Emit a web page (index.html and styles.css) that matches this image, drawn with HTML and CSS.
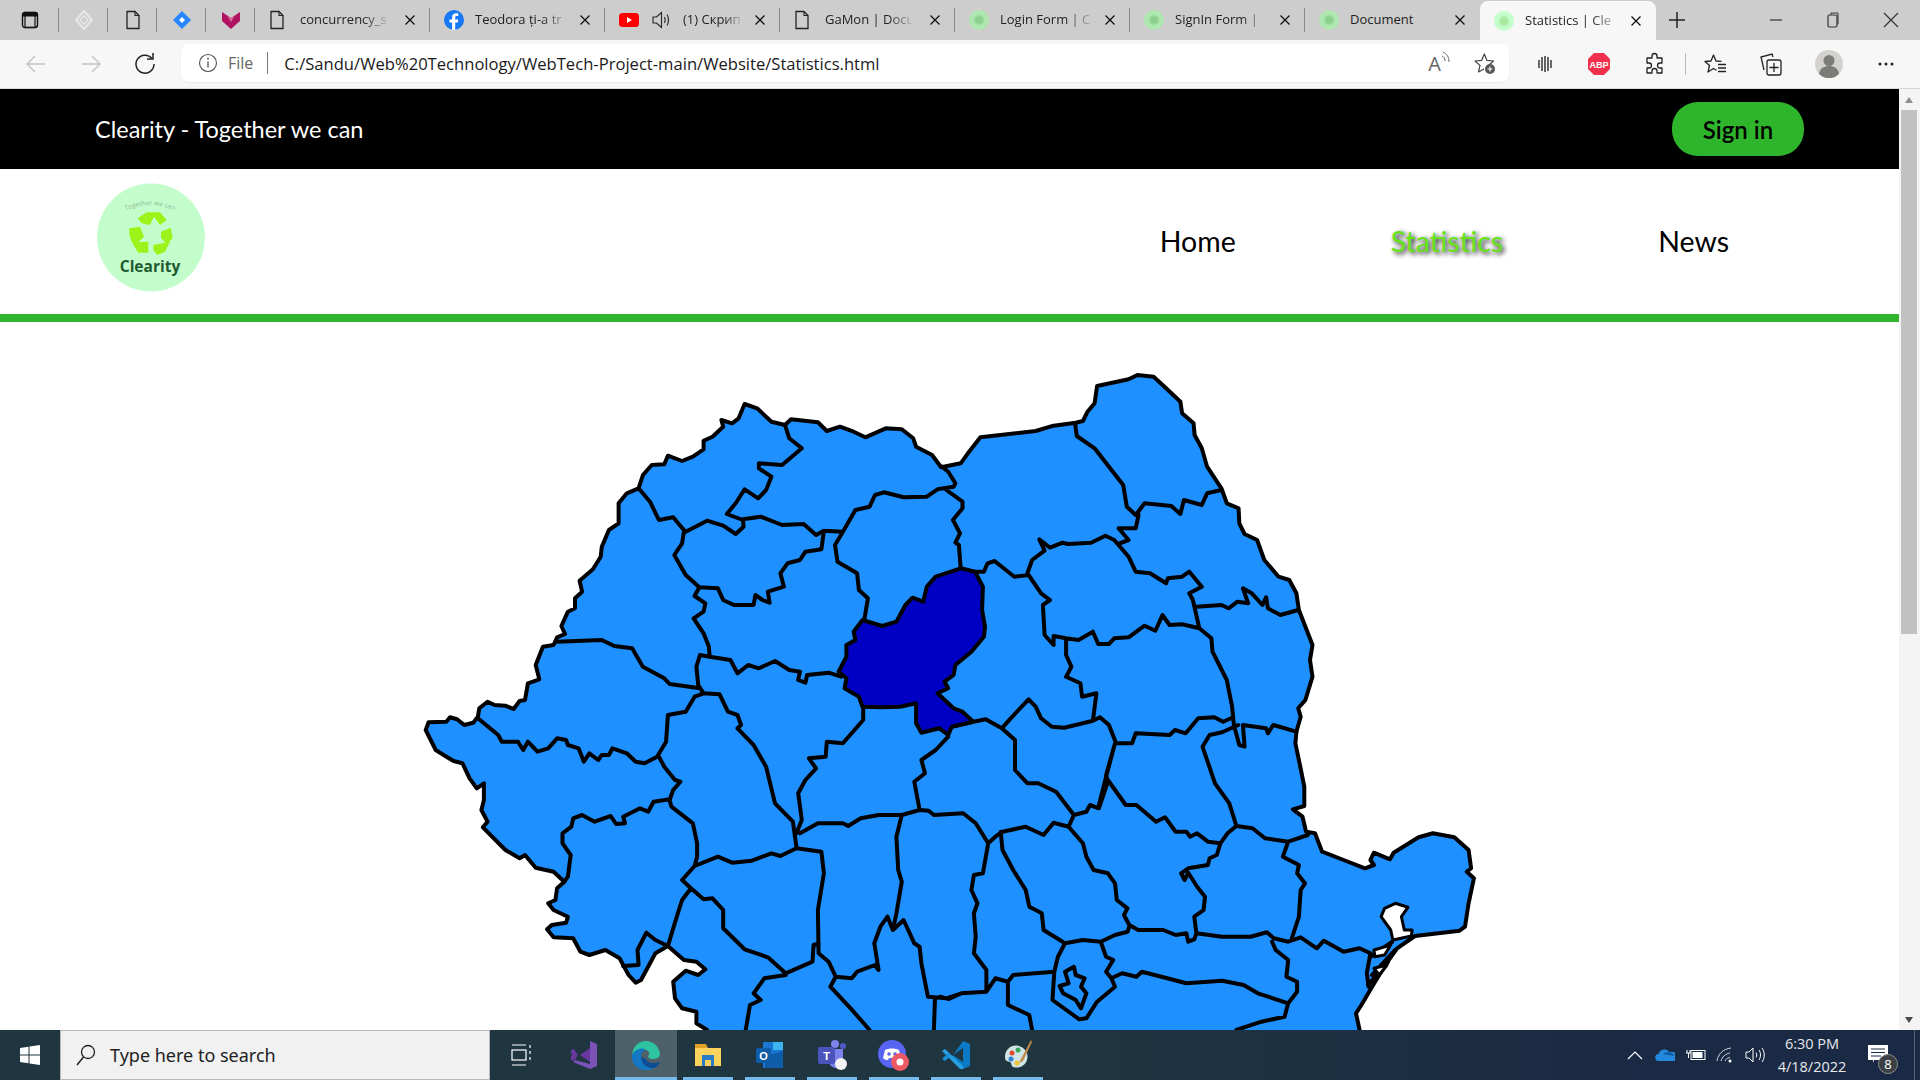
FILE: index.html
```html
<!DOCTYPE html>
<html lang="en">
<head>
    <meta charset="UTF-8">
    <meta name="viewport" content="width=device-width, initial-scale=1.0">
    <title>Statistics | Clearity</title>
    <link rel="stylesheet" href="styles.css">
</head>
<body>
<div class="screen">

    <!-- browser tabs -->
    <div class="tabstrip">
        <div class="pin pin-first">
            <svg width="18" height="18" viewBox="0 0 18 18"><rect x="1.5" y="1.5" width="15" height="15" rx="2.5" fill="none" stroke="#111" stroke-width="1.4"/><rect x="1.5" y="1.5" width="15" height="4" fill="#111"/><rect x="4" y="1.5" width="10" height="15" fill="none" stroke="#111" stroke-width="1.2"/></svg>
        </div>
        <div class="pin">
            <svg width="20" height="20" viewBox="0 0 20 20"><path d="M10 1l8 9-8 9-8-9z" fill="none" stroke="#e8e8e8" stroke-width="2"/><path d="M10 6l4 4-4 4-4-4z" fill="none" stroke="#e8e8e8" stroke-width="1.4"/></svg>
        </div>
        <div class="pin">
            <svg width="16" height="20" viewBox="0 0 16 20"><path d="M2 1.5h8l4 4v13H2z" fill="none" stroke="#222" stroke-width="1.3"/><path d="M10 1.5v4h4" fill="none" stroke="#222" stroke-width="1.1"/></svg>
        </div>
        <div class="pin">
            <svg width="20" height="20" viewBox="0 0 20 20"><path d="M10 1l9 9-9 9-9-9z" fill="#2684ff"/><path d="M10 7l3 3-3 3-3-3z" fill="#fff"/></svg>
        </div>
        <div class="pin">
            <svg width="20" height="20" viewBox="0 0 20 20"><path d="M1 2l9 6 9-6v9l-9 8-9-8z" fill="#b0135f"/><path d="M6 5l4 3 4-3-4 7z" fill="#d96aa0"/></svg>
        </div>

        <div class="tab tab-file">
            <svg class="fav" width="16" height="20" viewBox="0 0 16 20"><path d="M2 1.5h8l4 4v13H2z" fill="none" stroke="#222" stroke-width="1.3"/><path d="M10 1.5v4h4" fill="none" stroke="#222" stroke-width="1.1"/></svg>
            <span class="tab-title">concurrency_s</span>
            <svg class="tab-x" width="12" height="12" viewBox="0 0 12 12"><path d="M1.5 1.5l9 9M10.5 1.5l-9 9" stroke="#111" stroke-width="1.3"/></svg>
        </div>
        <div class="tab">
            <svg class="fav" width="20" height="20" viewBox="0 0 20 20"><circle cx="10" cy="10" r="10" fill="#1877f2"/><path d="M11.2 20v-7.6h2.6l.4-3h-3V7.6c0-.9.3-1.5 1.5-1.5h1.6V3.4c-.3 0-1.2-.1-2.3-.1-2.3 0-3.9 1.4-3.9 4v2.1H5.500v3h2.600V20z" fill="#fff"/></svg>
            <span class="tab-title">Teodora ți-a tr</span>
            <svg class="tab-x" width="12" height="12" viewBox="0 0 12 12"><path d="M1.5 1.5l9 9M10.5 1.5l-9 9" stroke="#111" stroke-width="1.3"/></svg>
        </div>
        <div class="tab tab-sound">
            <svg class="fav" width="20" height="14" viewBox="0 0 20 14"><rect width="20" height="14" rx="3.500" fill="#f00"/><path d="M8 4l5 3-5 3z" fill="#fff"/></svg>
            <svg class="fav" width="20" height="22" viewBox="0 0 20 22"><path d="M2 8h3.500l5-4.500v15L5.500 14H2z" fill="none" stroke="#222" stroke-width="1.100"/><path d="M13.500 8c1 2 1 4 0 6M16 5.500c2 3 2 8 0 11" fill="none" stroke="#222" stroke-width="1.100"/></svg>
            <span class="tab-title">(1) Скрип</span>
            <svg class="tab-x" width="12" height="12" viewBox="0 0 12 12"><path d="M1.5 1.5l9 9M10.5 1.5l-9 9" stroke="#111" stroke-width="1.3"/></svg>
        </div>
        <div class="tab tab-file">
            <svg class="fav" width="16" height="20" viewBox="0 0 16 20"><path d="M2 1.5h8l4 4v13H2z" fill="none" stroke="#222" stroke-width="1.3"/><path d="M10 1.5v4h4" fill="none" stroke="#222" stroke-width="1.1"/></svg>
            <span class="tab-title">GaMon | Docu</span>
            <svg class="tab-x" width="12" height="12" viewBox="0 0 12 12"><path d="M1.5 1.5l9 9M10.5 1.5l-9 9" stroke="#111" stroke-width="1.3"/></svg>
        </div>
        <div class="tab">
            <span class="fav-clearity"></span>
            <span class="tab-title">Login Form | C</span>
            <svg class="tab-x" width="12" height="12" viewBox="0 0 12 12"><path d="M1.5 1.5l9 9M10.5 1.5l-9 9" stroke="#111" stroke-width="1.3"/></svg>
        </div>
        <div class="tab">
            <span class="fav-clearity"></span>
            <span class="tab-title">SignIn Form |</span>
            <svg class="tab-x" width="12" height="12" viewBox="0 0 12 12"><path d="M1.5 1.5l9 9M10.5 1.5l-9 9" stroke="#111" stroke-width="1.3"/></svg>
        </div>
        <div class="tab tab-last">
            <span class="fav-clearity"></span>
            <span class="tab-title tab-title-plain">Document</span>
            <svg class="tab-x" width="12" height="12" viewBox="0 0 12 12"><path d="M1.5 1.5l9 9M10.5 1.5l-9 9" stroke="#111" stroke-width="1.3"/></svg>
        </div>
        <div class="tab tab-active">
            <span class="fav-clearity"></span>
            <span class="tab-title">Statistics | Cle</span>
            <svg class="tab-x" width="12" height="12" viewBox="0 0 12 12"><path d="M1.5 1.5l9 9M10.5 1.5l-9 9" stroke="#111" stroke-width="1.3"/></svg>
        </div>
        <div class="new-tab">
            <svg width="18" height="18" viewBox="0 0 18 18"><path d="M9 1v16M1 9h16" stroke="#222" stroke-width="1.5"/></svg>
        </div>
        <div class="window-btns">
            <svg width="14" height="14" viewBox="0 0 14 14"><path d="M1 7h12" stroke="#333" stroke-width="1.2"/></svg>
            <svg width="14" height="16" viewBox="0 0 14 16"><rect x="2" y="3" width="9" height="12" rx="1.500" fill="none" stroke="#333" stroke-width="1.200"/><path d="M5 3V1h7v11h-1" fill="none" stroke="#333" stroke-width="1"/></svg>
            <svg width="16" height="16" viewBox="0 0 16 16"><path d="M1 1l14 14M15 1L1 15" stroke="#333" stroke-width="1.200"/></svg>
        </div>
    </div>

    <!-- address bar -->
    <div class="toolbar">
        <div class="nav-btns">
            <svg width="22" height="22" viewBox="0 0 22 22"><path d="M20 11H3M10 3l-8 8 8 8" fill="none" stroke="#c4c4c4" stroke-width="1.400"/></svg>
            <svg width="22" height="22" viewBox="0 0 22 22"><path d="M2 11h17M12 3l8 8-8 8" fill="none" stroke="#c4c4c4" stroke-width="1.400"/></svg>
            <svg width="22" height="22" viewBox="0 0 22 22"><path d="M18 5.500A9 9 0 1 0 20 11" fill="none" stroke="#222" stroke-width="1.500"/><path d="M13 6h6V0" fill="none" stroke="#222" stroke-width="1.500"/></svg>
        </div>
        <div class="address">
            <svg width="20" height="20" viewBox="0 0 20 20"><circle cx="10" cy="10" r="8.500" fill="none" stroke="#555" stroke-width="1.100"/><path d="M10 8.500v6" stroke="#555" stroke-width="1.300"/><circle cx="10" cy="5.800" r="1" fill="#555"/></svg>
            <span class="addr-file">File</span>
            <span class="addr-sep"></span>
            <span class="addr-url">C:/Sandu/Web%20Technology/WebTech-Project-main/Website/Statistics.html</span>
            <span class="addr-read">A<svg width="10" height="14" viewBox="0 0 10 14"><path d="M1 6c2 1 3 2 3 5M2 2c4 2 6 5 6 10" fill="none" stroke="#666" stroke-width="1"/></svg></span>
            <svg class="addr-star" width="24" height="24" viewBox="0 0 24 24"><path d="M16.500 13.500l4-3.500-6.500-.6L11.300 3 8.600 9.400 2 10l5 4.400L5.500 21l5.500-3" fill="none" stroke="#444" stroke-width="1.200" stroke-linejoin="round"/><circle cx="17" cy="18" r="5" fill="#555"/><path d="M17 15.500v5M14.500 18h5" stroke="#fff" stroke-width="1.200"/></svg>
        </div>
        <div class="tool-icons">
            <svg width="18" height="20" viewBox="0 0 18 20"><path d="M3 6v8M6 3v14M9 2v16M12 3v14M15 6v8" stroke="#666" stroke-width="2"/></svg>
            <svg class="t-abp" width="24" height="24" viewBox="0 0 24 24"><path d="M7 1h10l6 6v10l-6 6H7l-6-6V7z" fill="#f0304c"/><text x="12" y="16" text-anchor="middle" class="abp-text">ABP</text></svg>
            <svg class="t-puzzle" width="24" height="24" viewBox="0 0 24 24"><path d="M9 4a2.500 2.500 0 0 1 5 0v2h5v5h-2a2.500 2.500 0 0 0 0 5h2v5h-5v-2a2.500 2.500 0 0 0-5 0v2H4v-5h2a2.500 2.500 0 0 0 0-5H4V6h5z" fill="none" stroke="#222" stroke-width="1.300" stroke-linejoin="round"/></svg>
            <span class="tool-sep"></span>
            <svg class="t-fav" width="24" height="24" viewBox="0 0 24 24"><path d="M17.500 9.400L12 9 9.500 3 7 9l-6 .5 4.500 4L4 20l5.500-3.500 3 1.800" fill="none" stroke="#222" stroke-width="1.300" stroke-linejoin="round"/><path d="M14 12.500h8M14 16h8M14 19.500h8" stroke="#222" stroke-width="1.300"/></svg>
            <svg class="t-coll" width="24" height="26" viewBox="0 0 24 26"><path d="M5 19L2 6l11-3 1 3" fill="none" stroke="#222" stroke-width="1.300"/><rect x="8" y="9" width="14" height="15" rx="2" fill="none" stroke="#222" stroke-width="1.300"/><path d="M15 12v9M10.500 16.500h9" stroke="#222" stroke-width="1.300"/></svg>
            <svg class="t-avatar" width="28" height="28" viewBox="0 0 28 28"><circle cx="14" cy="14" r="14" fill="#d3d1cd"/><circle cx="14" cy="10.500" r="5.500" fill="#7b7b78"/><path d="M4 24c1-6 5-8 10-8s9 2 10 8a14 14 0 0 1-20 0z" fill="#7b7b78"/></svg>
            <svg class="t-more" width="18" height="6" viewBox="0 0 18 6"><circle cx="3" cy="3" r="1.500" fill="#222"/><circle cx="9" cy="3" r="1.500" fill="#222"/><circle cx="15" cy="3" r="1.500" fill="#222"/></svg>
        </div>
    </div>

    <div class="viewport">
        <div class="page">
            <div class="topbar">
                <h1 class="brand-line">Clearity - Together we can</h1>
                <button class="signin">Sign in</button>
            </div>

            <div class="header">
                <svg class="logo" width="108" height="109" viewBox="0 0 108 109">
                    <circle cx="54" cy="54.500" r="54" fill="#c4fdcc"/>
                    <path id="logoArc" d="M28 28Q53 16 78 28" fill="none"/>
                    <text class="logo-small"><textPath href="#logoArc" startOffset="50%" text-anchor="middle">Together we can</textPath></text>
                    <g fill="#9af41a">
                        <path d="M40.700 35.300L49.700 29.300H63L69.700 37 63 42 57 33.700 53 42 44.700 40.300z"/>
                        <path d="M32.300 45.300L43 43.700 47 53.700 40.300 60.300 34.700 58.700 32.300 52z"/>
                        <path d="M34.700 59.300L51.300 58.700V69.700H41.300z"/>
                        <path d="M64 48.700L73.700 44.700 75.700 55.300 69.700 61.300 64 54.700z"/>
                        <path d="M56.300 62L73 58.700 68 68.700 60.300 72 56.300 67z"/>
                    </g>
                    <text class="logo-name" x="53" y="89" text-anchor="middle">Clearity</text>
                </svg>
                <nav class="menu">
                    <a class="menu-link">Home</a>
                    <a class="menu-link menu-current">Statistics</a>
                    <a class="menu-link">News</a>
                </nav>
            </div>
            <div class="rule"></div>

            <svg class="map" viewBox="0 322 1899 708" width="1899" height="708">
                <!-- country outline, clockwise from the western tip -->
                <path class="land" d="M425.700 730L428.600 722.300 446.400 721.700 450 717.300 457.100 719.300 464.300 725 473.200 722.700 477.900 716.700 479.300 708.300 487.500 701.700 494.600 705 505.400 705.700 513.600 709 519.600 701 525 700 527.900 683.300 539.300 679.300 535.700 665 542.900 646.700 553.600 645 557.100 637.300 565 634 561.400 626 567.900 611.700 575 608.300 575 598.300 582.100 591.700 579.600 580.700 592.900 569.300 600.700 556.700 601.800 546.700 608.900 530 618.600 523.300 618.600 503.300 626.800 493.300 638.600 488.300 642.900 475 651.800 465 664.300 464.300 667.900 455.700 682.100 461 692.900 456.700 703.600 449.300 703.600 440.700 712.500 436.700 723.200 426.700 721.400 420 732.100 423.300 738.600 418.300 744.600 404 757.100 408.300 771.400 421.700 785 425 791.100 419.300 817.900 422.300 826.800 431 840 426.700 853.600 431.700 865.400 437.300 885.700 428.300 901.800 429.300 913.200 438.300 916.100 446.700 932.100 455 941.100 467.300 960.700 463.300 967.900 453.300 980.400 437.300 1035.700 431 1053.600 425.700 1075.700 422.700 1082.900 421 1087.500 411.700 1094.600 403.300 1097.100 386 1128.600 379.300 1137.500 375 1153.600 376.700 1166.100 388.300 1180.400 401.700 1182.100 413.300 1193.600 423.300 1194.600 435 1201.800 448.300 1207.100 466.700 1221.400 488.300 1226.800 503.300 1238.600 508.300 1239.300 523.300 1244.600 534 1257.100 540 1264.300 560 1278.600 576.700 1289.300 580 1296.400 593.300 1298.900 610 1312.500 645 1310 660 1312.500 676.700 1305.400 700 1298.200 708.300 1300.700 716.700 1296.400 731.700 1295.400 743.300 1299.600 763.300 1304.300 786.700 1304.300 806 1292.900 809.300 1302.500 816.700 1306.100 831.700 1315 833.300 1322.100 851.700 1343.600 860 1365 868.300 1373.900 865 1370.400 860 1373.900 852.700 1390 859.300 1393.600 852.700 1418.600 837.300 1432.900 833.300 1454.300 837.300 1468.600 850 1471.100 868.300 1466.800 871.700 1473.900 878.300 1468.600 903.300 1465 926.700 1459.600 930.700 1415 936 1397.100 948.300 1386.400 963.300 1372.100 986.700 1361.400 1005 1356 1013.300 1359.600 1030 1359 1045H707L707.100 1030 696.400 1023.300 696.400 1011.700 682.100 1008.300 675 998.300 673.200 981.700 685.700 970.700 698.200 975 705.400 969.300 696.400 961.700 683.900 960 667.900 946 655.400 953.300 641 980 635.700 982.700 628.600 975 619.600 958.300 605.400 950 589.300 955 580.400 951.700 573.200 938.300 553.600 937.300 547.100 929.300 551.800 925 566.100 922.700 567.900 916.700 553.600 910 548.200 903.300 555.400 900 557.100 888.300 564.300 881.700 553.600 871.700 535.700 867.700 525 855 519.600 858.300 505.400 850 482.900 827.300 487.500 821.700 481.400 810 483.900 800 483.900 783.300 476.800 788.300 469.600 778.300 462.500 763.300 453.600 761 446.400 756.700 435.700 750z"/>
                <!-- county borders -->
                <path class="border" d="M785 425L789.300 438.300 801.800 448.300 782.100 465 758.900 463.300 758.900 468.300 771.400 476.700 766.100 490 758.200 498.300 744.600 489.300 735.700 503.300 726.800 514 742.900 520
                    M638.600 488.300L650 501.700 658.900 520 673.200 517.300 683.900 530 685.700 531.700 707.100 520.700 723.200 525.700 735.700 534 743.600 526.700 742.900 519.300 760.700 516.700 782.100 525 803.600 524 816.100 535 823.900 530.700 842.900 531.700 855.400 510 869.600 506.700 875 495 883.900 492.300 903.600 497.300 926.800 496.700 937.500 489.300 953.600 486.700 955.400 483.300 948.200 471.700 942.100 466.700
                    M683.900 531.700L682.100 543.300 674.300 555 685.700 575 699.300 587.300 694.600 596 705.400 603.300 703.600 611.700 693.600 618.300 703.600 633.300 708.900 646.700 709.600 656.700
                    M699.300 587.300L717.900 588.300 723.200 600 733.900 605 753.600 605 755.400 595 762.500 600 769.600 602.700 767.900 591.700 783.900 586.700 780.400 573.300 787.500 563.300 800 560 805.400 551.700 821.400 549.300 823.900 530.700
                    M557.100 641.700L601.800 640 614.300 646 632.100 648.300 642.900 666.700 664.300 678.300 669.600 684 700 688.300
                    M709.600 656.700L700 655 696.400 666.700 698.200 685 703.600 693.300 719.600 694.300 727.900 711.700 737.500 715 741.100 725 737.500 728.300 753.600 745 766.100 766.700 775 803.300 792.900 821.700 796.400 846.700
                    M709.600 656.700L730.400 660 737.500 673.300 748.200 665 758.900 668.300 775 661 789.300 670 800 671.700 798.200 680 805.400 682.700 807.100 675 828.600 672.700 841.100 676.700
                    M842.900 531.700L835 545 837.500 561.700 857.100 573.300 858.900 590 867.900 598.300 864.300 620
                    M477.900 718.300L498.200 735 501.800 741.700 517.900 741.700 523.200 750 527.900 741.700 537.500 751.700 548.200 748.300 557.100 738.300 566.100 740 567.900 745 578.600 748.300 583.900 761.700 589.300 753.300 598.200 760 601.800 755 608.900 755 612.500 748.300 626.800 753.300 635.700 761.700 644.600 763.300 657.100 756.700 666.100 741.700 667.900 715 685.700 711.700 694.600 696.700 703.600 693.300
                    M658.900 756.700L664.300 766.700 675 780 680.400 781.700 673.200 790 669.600 800 671.400 806.700 692.900 823.300 697.100 843.300 697.100 856.700 694.600 866 682.100 880 691 888.300 682.100 900 676.800 916.700 667.900 946
                    M669.600 799.300L653.600 801.700 648.200 811.700 640 808.300 623.200 816.700 625 823.300 616.100 824 610.700 816 594.600 821.700 582.100 815 573.200 818.300 571.400 826.700 562.500 833.300 562.500 843.300 570.700 855 567.900 876.700 564.300 881.700
                    M667.900 946L655.400 940 646.400 932.700 637.500 950 638.600 965 623.200 966
                    M694.600 866L717.900 856.700 732.100 862.700 751.800 860.700 771.400 853.300 780.400 856 796.400 848.300 821.400 851.700 823.900 873.300 817.900 910 818.600 953.300 828.600 961.700 835.700 976.700 851.800 978.300 857.100 971.700 875 965 878.600 970 874.300 943.300 880.400 926.700 887.500 916.700 892.900 930 903.600 920 914.300 943.300 919.600 946.700 921.400 963.300 927.900 996.700 946.400 998.300 960 994
                    M691 888.300L703.600 899.300 712.500 898.300 723.200 910 723.200 928.300 744.600 949.300 767.900 957.300 785.700 973.300 812.500 961.700 813.600 945 818.600 943.300
                    M785.700 975L764.300 978.300 753.600 993.300 760.700 1000 750 1005 745.700 1030
                    M835.700 976.700L830.400 986.700 853.600 1011.700 869.600 1030
                    M935 998.300L933.900 1030
                    M800 833.300L817.900 823.300 842.900 823.300 848.200 826 860.700 818.300 878.600 815 901.800 815 919.600 810 928.600 810.700 933.900 815 963.200 813.300 975.700 823.300 988.200 843.300 995.400 836.700 1002.500 831.700 1025.700 826.700 1043.600 835 1053.600 822.700 1068.600 826.700 1073.900 815 1086.400 811.700 1090 805 1098.900 808.300 1107.900 781.700 1106.100 775 1115 743.300
                    M901.800 815L896.400 836.700 898.200 870 901.800 881.700 896.400 913.300 892.900 930
                    M919.600 810L914.300 781.700 925 773.300 921.400 760 935.700 750 948.200 736.700
                    M863.200 706.700L863.200 720 842.900 743.300 826.800 741.700 825.700 756.700 808.900 758.300 816.100 768.300 805.400 780 798.200 793.300 801.800 820 796.400 833.300
                    M951.800 726.700L973.200 721.700 985.700 719.300 1001.800 728.300 1010.700 718.300 1028.600 699.300 1035.700 706.700 1041.100 718.300 1051.800 726.700 1064.300 727.700 1092.900 720.700 1100 717.300 1108.900 725 1116.100 743.300 1132.100 743.300 1135.700 733.300 1169.600 735 1175 730 1185.700 733.300 1198.200 718.300 1214.300 717.300 1223.200 721.700 1232.100 717.700
                    M960.700 568.300L958.900 545 955.400 542.700 960 533.300 952.900 520 962.500 508.300 962.500 501.700 946.400 490
                    M975 571.700L983.900 571.700 987.500 563.300 994.600 561 1014.300 576.700 1028.600 575 1041.100 593.300 1050 600 1042.900 605 1044.600 635 1053.600 645 1053.600 636 1066.100 638.300 1078.600 640 1092.900 631.700 1098.200 644 1108.900 644 1114.300 638.300 1128.600 637.300 1144.600 625.700 1155.400 630.700 1162.500 615 1169.600 625 1182.100 624.300 1199.300 628.300 1192.900 600 1189.300 593.300 1201.800 586.700 1189.300 571.700 1182.100 576.700 1167.900 578.300 1166.100 583.300 1150 573.300 1135.700 571.700 1128.600 556.700 1114.300 540 1105.400 535.700 1091.100 542.700 1067.900 544 1062.500 542.700 1050 547.700 1039.300 539.300 1044.600 550.700 1032.100 560 1026.800 575
                    M1075 423.300L1076.800 436 1094.600 448.300 1123.200 485 1126.800 506.700 1135.700 515 1144.600 503.300 1171.400 506 1180.400 514 1183.900 500 1201.800 505 1207.100 493.300 1221.400 490
                    M1138.600 515L1135.700 528.300 1118.600 528.300 1128.600 540 1119.600 543.300
                    M1196.400 606.700L1221.400 605 1228.600 608.300 1237.500 601.700 1248.200 603.300 1242.900 588.300 1251.800 593.300 1262.500 605 1266.100 597.300 1267.900 608.300 1280.400 615 1298.200 610
                    M1199.300 628.300L1211.400 638.300 1212.500 651.700 1226.800 680 1232.100 706.700 1233.900 725 1239.300 745 1244.600 746.700 1242.900 725 1266.100 728.300 1267.900 733.300 1273.200 725 1296.400 731.700
                    M1066.100 640L1066.100 655 1071.400 666.700 1066.100 676.700 1080.400 683.300 1082.100 696.700 1096.400 693.300 1092.900 720.700
                    M1238.200 725L1222.100 732.300 1209.600 735 1202.500 746.700 1215 783.300 1229.300 803.300 1236.400 826 1252.500 828.300 1265 838.300 1288.200 841.700 1307.900 835
                    M1115 743.300L1106.100 776.700 1098.900 805
                    M1001.800 728.300L1015 740 1015 770 1027.500 783.300 1038.200 783.300 1056.100 791.700 1073.900 815
                    M1107.900 780L1125.700 805 1136.400 805 1156.100 821.700 1165 817.300 1175.700 831.700 1186.400 831.700 1190 836.700 1197.100 833.300 1207.900 841.700 1220.400 843.300 1227.500 833.300 1236.400 826
                    M1220.400 843.300L1216.800 855 1209.600 858.300 1207.900 865 1188.200 868.300 1181.100 873.300 1184.600 880 1188.200 872.700 1197.100 886.700 1205 896.700 1203.600 910 1194.300 916.700 1196.400 933.300 1194.300 939.300 1188.200 941.700 1186.400 933.300 1175.700 935 1163.200 930 1138.200 930 1129.300 925 1123.900 915 1127.500 908.300 1116.800 900 1115 883.300 1107.900 873.300 1093.600 870 1086.400 856.700 1082.900 843.300 1068.600 826.700
                    M1288.200 841.700L1282.900 856.700 1298.900 865 1297.100 873.300 1305 883.300 1300.700 890 1298.900 916.700 1291.800 938.300
                    M1196.400 933.300L1222.100 936.700 1250.700 936.700 1266.800 932.300 1273.900 938.300 1288.200 941.700 1300.700 937.300 1316.800 948.300 1323.900 940.700 1343.600 951.700 1359.600 948.300 1370.400 953.300
                    M1272.100 941.700L1275.700 950 1288.200 960 1286.400 976.700 1297.100 981.700 1297.100 991.700 1288.200 1003.300 1284.600 1016.700 1261.400 1021.700 1236.400 1030
                    M1288.200 1003.300L1257.900 993.300 1243.600 985 1222.100 980.700 1186.400 983.300 1161.400 976.700 1141.800 971.700 1136.400 976.700 1122.100 973.300 1111.400 978.300 1115 986.700 1097.100 1001.700 1086.400 1018.300 1079.300 1019.300 1052.500 1000 1054.300 971.700 1057.900 956.700 1065 943.300 1082.900 940 1100.700 941.700 1106.100 956.700 1113.200 960 1106.100 971.700 1111.400 978.300
                    M1100.700 941.700L1115 935 1127.500 931.700 1129.300 926.700
                    M1065 943.300L1043.600 930 1041.800 913.300 1029.300 906.700 1025.700 890 1013.200 870 1002.500 850 1000.700 831.700
                    M988.200 843.300L982.900 873.300 973.900 875 971.400 890 977.500 903.300 973.900 913.300 975.700 936.700 973.900 953.300 986.400 970 986.400 991.700 995.400 978.300 1007.900 981.700 1013.200 975 1054.300 971.700
                    M1007.900 981.700L1007.900 1005 1029.300 1015 1032.100 1030
                    M986.400 991.700L961.400 993.300 948.900 999 940 996.700
                    M1073.900 966.700L1065 971.700 1068.600 983.300 1059.600 986 1063.200 993.300 1075.700 1000 1081 1008.300 1086.400 993.300 1081 986.700 1084.600 978.300 1075.700 975z
                    M1370.400 953.300L1366.800 973.300 1368.600 986.700
                    M1370.400 957L1392 942M1372 975L1395 950M1368 985L1388 962"/>
                <!-- lake Razim and the delta -->
                <path class="lake" d="M1395.400 903.300L1407.900 907.300 1401.400 916.700 1404.300 930 1412.100 930 1411.400 936 1392.900 940 1390.700 930 1381.100 916.700 1384.600 908.300z"/>
                <path class="lake" d="M1373.900 950L1390.700 945 1384.600 955 1375 956.700z"/>
                <path class="lake" d="M1373.900 968.300L1387.100 965 1379.300 975z"/>
                <!-- highlighted county -->
                <path class="county-on" d="M862.500 620L882.100 626 896.400 621.700 905.400 605 912.500 597.700 923.200 601.700 926.800 586.700 935.700 576.700 960.700 568.300 975 571.700 982.900 586.700 982.100 610 985 626.700 983.900 636.700 971.400 651.700 955.400 665 953.600 675 944.600 681.700 948.200 688.300 937.500 693.300 953.600 708.300 962.500 711.700 973.200 721.700 951.800 726.700 948.200 735 939.300 728.300 921.400 732.700 916.100 723.300 916.100 703.300 900 706.700 882.100 707.300 862.500 706.700 858.900 696.700 844.600 688.300 846.400 678.300 838.600 671.700 846.400 656.700 846.400 645 855.400 640 853.600 631.700z"/>
            </svg>
        </div>
        <div class="scrollbar">
            <span class="scroll-up"></span>
            <div class="scroll-thumb"></div>
            <div class="scroll-rest"></div>
            <span class="scroll-down"></span>
        </div>
    </div>

    <!-- windows taskbar -->
    <div class="taskbar">
        <div class="start">
            <svg width="20" height="20" viewBox="0 0 20 20"><path d="M0 3l8.500-1.200v7.700H0zM9.500 1.600L20 0v9.500H9.500zM0 10.500h8.500v7.700L0 17zM9.500 10.500H20V20L9.500 18.400z" fill="#fff"/></svg>
        </div>
        <div class="search">
            <svg width="22" height="24" viewBox="0 0 22 24"><circle cx="13" cy="9" r="6.500" fill="none" stroke="#222" stroke-width="1.300"/><path d="M8.500 14L2 22" stroke="#222" stroke-width="1.500"/></svg>
            <span>Type here to search</span>
        </div>
        <div class="task-icons">
            <div class="task-item task-plain">
                <svg width="22" height="22" viewBox="0 0 22 22"><path d="M1 1h14M1 21h14" stroke="#fff" stroke-width="1.200"/><rect x="1" y="6" width="14" height="10" fill="none" stroke="#fff" stroke-width="1.200"/><path d="M19 1v3M19 7v3M19 13v3" stroke="#fff" stroke-width="1.200"/></svg>
            </div>
            <div class="task-item task-plain">
                <svg width="30" height="30" viewBox="0 0 30 30"><path d="M21 1l7 3v22l-7 3-17-7 2-2 15 4z" fill="#7b52b8"/><path d="M21 8v14L11 15zM2 10l3-1 4 6-4 6-3-1v-4l2-1-2-1z" fill="#68379f"/></svg>
            </div>
            <div class="task-item task-on task-open">
                <svg width="32" height="32" viewBox="0 0 32 32"><path d="M2 16C3 7 9 2 16 2c7 0 13 5 14 13 0 3-3 5-7 5-3 0-5-1-5-3 2-1 2-3 0-5-4-3-13-2-16 4z" fill="#2ec4a0"/><path d="M2 16c3-6 10-8 14-5-3 0-5 3-5 7 0 6 6 12 13 11-3 2-6 2-8 2C8 31 1 25 2 16z" fill="#1477c4"/><path d="M11 18c0 6 6 12 13 11 3-1 5-4 6-6-3 1-12 3-14-3z" fill="#0b4d97"/></svg>
            </div>
            <div class="task-item task-open">
                <svg width="30" height="30" viewBox="0 0 30 30"><path d="M2 4h11l2 4h13v6H2z" fill="#e0a227"/><rect x="2" y="8" width="26" height="18" fill="#fbd35c"/><rect x="9" y="15" width="12" height="11" fill="#2a7cc7"/><rect x="12" y="20" width="6" height="6" fill="#fbd35c"/></svg>
            </div>
            <div class="task-item task-open">
                <svg width="32" height="32" viewBox="0 0 32 32"><rect x="9" y="3" width="20" height="26" rx="1" fill="#1a78d4"/><rect x="19" y="3" width="10" height="8" fill="#3eb4f0"/><path d="M11 17l18-5v17H11z" fill="#0f5ca8"/><rect x="2" y="9" width="15" height="15" rx="1.500" fill="#0f5ca8"/><text x="9.500" y="21" text-anchor="middle" class="ol-text">O</text></svg>
            </div>
            <div class="task-item task-open">
                <svg width="32" height="32" viewBox="0 0 32 32"><circle cx="19" cy="5" r="4" fill="#7b83eb"/><circle cx="27" cy="7" r="3" fill="#5059c9"/><path d="M13 10h14v12a7 7 0 0 1-14 0z" fill="#7b83eb"/><rect x="2" y="8" width="17" height="17" rx="2" fill="#4b53bc"/><text x="10.500" y="21" text-anchor="middle" class="ol-text">T</text><circle cx="25" cy="25" r="6" fill="#f3f3f3"/></svg>
            </div>
            <div class="task-item task-open">
                <svg width="32" height="34" viewBox="0 0 32 34"><circle cx="14" cy="16" r="14" fill="#5865f2"/><path d="M7 12c4-2 10-2 14 0l2 8c-2 2-4 2-5 2l-1-2h-6l-1 2c-1 0-3 0-5-2z" fill="#fff"/><circle cx="11" cy="16" r="1.800" fill="#5865f2"/><circle cx="17" cy="16" r="1.800" fill="#5865f2"/><circle cx="22" cy="24" r="9" fill="#ed5a64"/><circle cx="22" cy="24" r="3.500" fill="#fff"/></svg>
            </div>
            <div class="task-item task-open">
                <svg width="30" height="30" viewBox="0 0 30 30"><path d="M22 1l7 3v22l-7 3-12-11z" fill="#0a7ac6"/><path d="M22 8L12 15l10 7z" fill="#1f3540"/><path d="M1 11l3-2 18 17v3l-3 0z" fill="#27a0e3"/><path d="M1 19l3 2 6-5-3-3z" fill="#1a8ed6"/></svg>
            </div>
            <div class="task-item task-open">
                <svg width="32" height="32" viewBox="0 0 32 32"><path d="M3 18C3 10 10 5 17 7c6 2 10 7 8 14-2 6-8 9-14 7-2-1-1-4-3-5s-5 0-5-5z" fill="#cfe5e5"/><circle cx="10" cy="14" r="2.500" fill="#e4492e"/><circle cx="16" cy="11" r="2.500" fill="#3aa655"/><circle cx="9" cy="20" r="2.500" fill="#2f7fd2"/><circle cx="15" cy="24" r="2.500" fill="#f2c531"/><path d="M29 1L19 20l-2 4 4-2L30 3z" fill="#c08a4a"/></svg>
            </div>
        </div>
        <div class="tray">
            <svg class="tray-chev" width="16" height="10" viewBox="0 0 16 10"><path d="M1 9l7-7 7 7" fill="none" stroke="#fff" stroke-width="1.200"/></svg>
            <svg class="tray-cloud" width="20" height="14" viewBox="0 0 20 14"><path d="M4 13a3.500 3.500 0 0 1-.5-7 6 6 0 0 1 11-1.500 4.500 4.500 0 0 1 5 8.500z" fill="#2489dc"/><path d="M8 6a6 6 0 0 1 6.500-1.500A4.500 4.500 0 0 1 19 8z" fill="#0f5ca8"/></svg>
            <svg class="tray-batt" width="20" height="14" viewBox="0 0 20 14"><rect x="5" y="2.500" width="14" height="9" fill="none" stroke="#fff"/><rect x="6.500" y="4" width="10" height="6" fill="#fff"/><path d="M1 2v3M4 2v3M0 5h5M2.500 5v5" stroke="#fff" stroke-width="1"/></svg>
            <svg class="tray-wifi" width="18" height="16" viewBox="0 0 18 16"><path d="M1 14C2 7 7 2 15 1M5 14c1-4 4-7 9-8M9 14c1-2 2-3 5-3.500" fill="none" stroke="#cfd3da" stroke-width="1"/><circle cx="14" cy="14" r="1.500" fill="#fff"/></svg>
            <svg class="tray-sound" width="20" height="16" viewBox="0 0 20 16"><path d="M1 5h3l4-4v14l-4-4H1z" fill="none" stroke="#fff"/><path d="M11 5.500c1 1.500 1 3.500 0 5M14 3c2 3 2 7 0 10M17 1c3 4 3 10 0 14" fill="none" stroke="#fff"/></svg>
            <div class="clock">
                <span>6:30 PM</span>
                <span>4/18/2022</span>
            </div>
            <div class="notify">
                <svg width="20" height="18" viewBox="0 0 20 18"><path d="M0 0h20v15H6l-1 3v-3H0z" fill="#fff"/><path d="M3 4h14M3 7.500h14M3 11h10" stroke="#1b2a44" stroke-width="1"/></svg>
                <span class="notify-badge">8</span>
            </div>
            <span class="desk-line"></span>
        </div>
    </div>
</div>
</body>
</html>
```

FILE: styles.css
```css
* {
    box-sizing: border-box;
}
html, body {
    margin: 0;
    height: 100%;
    overflow: hidden;
}
body {
    font-family: "Noto Sans", sans-serif;
    background: #fff;
}
.screen {
    width: 1920px;
    height: 1080px;
    display: flex;
    flex-direction: column;
}

/* tabs */
.tabstrip {
    height: 40px;
    background: #cdcdcd;
    display: flex;
    align-items: flex-end;
    flex-shrink: 0;
}
.pin {
    width: 49px;
    height: 40px;
    display: flex;
    align-items: center;
    justify-content: center;
    position: relative;
}
.pin::after, .tab::after {
    content: "";
    position: absolute;
    right: 0;
    top: 8px;
    height: 24px;
    width: 1px;
    background: #8a8a8a;
}
.pin-first {
    width: 59px;
}
.tab {
    width: 175px;
    height: 40px;
    display: flex;
    align-items: center;
    padding: 0 14px;
    gap: 11px;
    position: relative;
    font-size: 14px;
    color: #222;
}
.tab .fav {
    flex-shrink: 0;
}
.tab-file {
    gap: 15px;
}
.tab-sound {
    gap: 12px;
}
.tab-last::after, .tab-active::after {
    display: none;
}
.tab-active {
    width: 176px;
    height: 39px;
    background: #f7f7f7;
    border-radius: 8px 8px 0 0;
}
.tab-title {
    flex: 1;
    min-width: 0;
    white-space: nowrap;
    margin-top: -2px;
    font-family: "Open Sans", sans-serif;
    font-size: 13px;
    -webkit-mask-image: linear-gradient(to right, #000 72%, rgba(0, 0, 0, 0.15) 100%);
    mask-image: linear-gradient(to right, #000 72%, rgba(0, 0, 0, 0.15) 100%);
}
.tab-title-plain {
    -webkit-mask-image: none;
    mask-image: none;
}
.tab-x {
    flex-shrink: 0;
    margin-left: 2px;
}
.fav-clearity {
    width: 20px;
    height: 20px;
    border-radius: 50%;
    background: radial-gradient(circle at 50% 50%, #8ccf8e 0 3px, #aee8b0 6px);
    flex-shrink: 0;
}
.tab-active .fav-clearity {
    background: radial-gradient(circle at 50% 50%, #a6e89c 0 3px, #c4fdcc 6px);
}
.new-tab {
    width: 42px;
    height: 40px;
    display: flex;
    align-items: center;
    justify-content: center;
}
.window-btns {
    margin-left: auto;
    height: 40px;
    width: 151px;
    padding-right: 21px;
    display: flex;
    align-items: center;
    justify-content: space-between;
}

/* address bar */
.toolbar {
    height: 49px;
    background: #f7f7f7;
    border-bottom: 1px solid #d8d8d8;
    display: flex;
    align-items: center;
    flex-shrink: 0;
}
.nav-btns {
    width: 181px;
    padding: 0 25px;
    display: flex;
    justify-content: space-between;
}
.address {
    width: 1328px;
    height: 38px;
    margin-top: -2px;
    background: #fff;
    border-radius: 8px;
    display: flex;
    align-items: center;
    padding: 0 12px 0 17px;
    font-family: "Open Sans", sans-serif;
    font-size: 16px;
    box-shadow: 0 1px 2px rgba(0, 0, 0, 0.06);
}
.addr-file {
    margin-left: 10px;
    color: #666;
}
.addr-sep {
    width: 1px;
    height: 22px;
    background: #777;
    margin: 0 16px 0 14px;
}
.addr-url {
    color: #1a1a1a;
    flex: 1;
    font-size: 16.600px;
    white-space: nowrap;
}
.addr-read {
    color: #666;
    font-size: 20px;
    display: flex;
    align-items: flex-start;
    margin-right: 22px;
}
.tool-icons {
    flex: 1;
    display: flex;
    align-items: center;
    padding-left: 27px;
}
.t-abp {
    margin-left: 33px;
}
.t-puzzle {
    margin-left: 32px;
}
.tool-sep {
    width: 1px;
    height: 22px;
    margin-left: 18px;
    background: #bbb;
}
.t-fav {
    margin-left: 18px;
}
.t-coll {
    margin-left: 31px;
}
.t-avatar {
    margin-left: 32px;
}
.t-more {
    margin-left: 34px;
}
.abp-text {
    font-family: "Liberation Sans", sans-serif;
    font-size: 9px;
    font-weight: bold;
    fill: #fff;
}

/* the page inside the browser */
.viewport {
    height: 941px;
    display: flex;
    flex-shrink: 0;
}
.page {
    flex: 1;
    overflow: hidden;
    background: #fff;
}
.topbar {
    height: 80px;
    background: #000;
    display: flex;
    align-items: center;
    justify-content: space-between;
    padding: 0 95px;
}
.brand-line {
    margin: 0;
    color: #fff;
    font-family: Lato, sans-serif;
    font-size: 23.500px;
    font-weight: 400;
}
.signin {
    width: 132px;
    height: 54px;
    background: #2fb52c;
    color: #000;
    border: none;
    border-radius: 26px;
    font-family: Lato, sans-serif;
    font-size: 24px;
    font-weight: 600;
    padding: 0;
}
.header {
    height: 145px;
    display: flex;
    align-items: center;
    padding: 0 170px 0 97px;
}
.logo {
    margin-top: -9px;
}
.logo-small {
    font-family: "Open Sans", sans-serif;
    font-size: 6.500px;
    fill: #8fb89a;
}
.logo-name {
    font-family: "Open Sans", sans-serif;
    font-size: 15.500px;
    font-weight: 700;
    fill: #1f5a30;
}
.menu {
    margin-left: auto;
    margin-top: -1px;
    display: flex;
    gap: 155px;
}
.menu-link {
    font-family: Lato, sans-serif;
    font-size: 28.500px;
    color: #000;
}
.menu-current {
    color: #64e414;
    text-shadow: 2px 2px 5px #000;
}
.rule {
    height: 8px;
    background: #32b52c;
}
.map {
    display: block;
}
.land, .border, .county-on {
    stroke: #000;
    stroke-width: 4;
    stroke-linejoin: round;
    stroke-linecap: round;
}
.land {
    fill: #1e90ff;
}
.border {
    fill: none;
}
.lake {
    fill: #fff;
    stroke: #000;
    stroke-width: 3;
    stroke-linejoin: round;
}
.county-on {
    fill: #0000c4;
}

/* page scrollbar */
.scrollbar {
    width: 21px;
    background: #f4f4f4;
    padding: 0 3px 0 2px;
    display: flex;
    flex-direction: column;
    align-items: center;
}
.scroll-up, .scroll-down {
    height: 21px;
    flex-shrink: 0;
    display: flex;
    align-items: center;
}
.scroll-up::before {
    content: "";
    border: 4px solid transparent;
    border-top: 0;
    border-bottom: 6px solid #8c8c8c;
}
.scroll-down::before {
    content: "";
    border: 4px solid transparent;
    border-bottom: 0;
    border-top: 6px solid #4a4a4a;
}
.scroll-thumb {
    width: 100%;
    height: 524px;
    background: #c1c1c1;
    flex-shrink: 0;
}
.scroll-rest {
    flex: 1;
}

/* taskbar */
.taskbar {
    height: 50px;
    background: linear-gradient(to right, #1f3540 0%, #1f3540 55%, #1b2a44 85%);
    display: flex;
    align-items: stretch;
    flex-shrink: 0;
}
.start {
    width: 60px;
    display: flex;
    align-items: center;
    justify-content: center;
}
.search {
    width: 430px;
    background: #f1f1f1;
    border: 1px solid #b9b9b9;
    display: flex;
    align-items: center;
    gap: 13px;
    padding-left: 14px;
    font-size: 18px;
    color: #222;
}
.task-icons {
    display: flex;
    padding-left: 1px;
}
.task-item {
    width: 62px;
    display: flex;
    align-items: center;
    justify-content: center;
    position: relative;
}
.task-open::after {
    content: "";
    position: absolute;
    left: 6px;
    right: 6px;
    bottom: 0;
    height: 3px;
    background: #76b9ed;
}
.task-on {
    background: #4d616a;
}
.task-on::after {
    left: 0;
    right: 0;
}
.ol-text {
    font-family: "Liberation Sans", sans-serif;
    font-size: 11px;
    font-weight: bold;
    fill: #fff;
}
.tray {
    margin-left: auto;
    display: flex;
    align-items: center;
    color: #fff;
}
.tray-chev {
    margin-right: 12px;
}
.tray-cloud {
    margin-right: 11px;
}
.tray-batt {
    margin-right: 10px;
}
.tray-wifi {
    margin-right: 11px;
}
.tray-sound {
    margin-right: 2px;
}
.clock {
    width: 90px;
    display: flex;
    flex-direction: column;
    align-items: center;
    font-family: "Open Sans", sans-serif;
    font-size: 14.500px;
    line-height: 23px;
    color: #e6e8ec;
}
.notify {
    width: 49px;
    height: 100%;
    padding-left: 11px;
    padding-top: 15px;
    position: relative;
}
.notify-badge {
    position: absolute;
    left: 21px;
    top: 24px;
    width: 20px;
    height: 20px;
    border-radius: 50%;
    background: #3c3f44;
    border: 1px solid #8a8a8a;
    font-family: "Open Sans", sans-serif;
    font-size: 13px;
    line-height: 18px;
    text-align: center;
    color: #fff;
}
.desk-line {
    width: 1px;
    height: 100%;
    margin: 0 5px 0 8px;
    background: #566272;
}
```
